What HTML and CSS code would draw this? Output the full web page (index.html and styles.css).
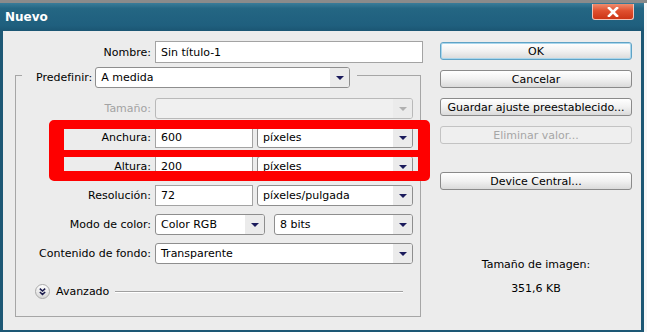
FILE: index.html
```html
<!DOCTYPE html>
<html lang="es">
<head>
    <meta charset="UTF-8">
    <title>Nuevo</title>
    <link rel="stylesheet" href="styles.css">
</head>
<body>
    <div class="window">
        <div class="titlebar">
            <span class="title">Nuevo</span>
            <span class="close">
                <svg width="14" height="10" viewBox="0 0 14 10"><path d="M3 1 L11 9 M11 1 L3 9" stroke="#fff" stroke-width="2.6" stroke-linecap="square"/></svg>
            </span>
        </div>
        <div class="content">
            <div class="main">
                <div class="row name-row">
                    <label class="lbl">Nombre:</label>
                    <div class="input name-input">Sin título-1</div>
                </div>
                <fieldset class="group">
                    <legend class="preset">
                        <span class="preset-lbl">Predefinir:</span>
                        <div class="select preset-select"><span class="val">A medida</span><span class="arrow"><i></i></span></div>
                    </legend>
                    <div class="row first">
                        <label class="lbl off">Tamaño:</label>
                        <div class="select full off"><span class="val"></span><span class="arrow"><i></i></span></div>
                    </div>
                    <div class="row">
                        <label class="lbl">Anchura:</label>
                        <div class="input num">600</div>
                        <div class="select unit"><span class="val">píxeles</span><span class="arrow"><i></i></span></div>
                    </div>
                    <div class="row">
                        <label class="lbl">Altura:</label>
                        <div class="input num">200</div>
                        <div class="select unit"><span class="val">píxeles</span><span class="arrow"><i></i></span></div>
                    </div>
                    <div class="row">
                        <label class="lbl">Resolución:</label>
                        <div class="input num">72</div>
                        <div class="select unit"><span class="val">píxeles/pulgada</span><span class="arrow"><i></i></span></div>
                    </div>
                    <div class="row">
                        <label class="lbl">Modo de color:</label>
                        <div class="select mode"><span class="val">Color RGB</span><span class="arrow"><i></i></span></div>
                        <div class="select bits"><span class="val">8 bits</span><span class="arrow"><i></i></span></div>
                    </div>
                    <div class="row">
                        <label class="lbl">Contenido de fondo:</label>
                        <div class="select full"><span class="val">Transparente</span><span class="arrow"><i></i></span></div>
                    </div>
                    <div class="advanced">
                        <span class="toggle">
                            <svg width="15" height="15" viewBox="0 0 15 15">
                                <defs>
                                    <linearGradient id="tg" x1="0" y1="0" x2="0" y2="1">
                                        <stop offset="0" stop-color="#ffffff"/>
                                        <stop offset="1" stop-color="#d6d6d6"/>
                                    </linearGradient>
                                </defs>
                                <circle cx="7.5" cy="7.5" r="7" fill="url(#tg)" stroke="#a9a9a9"/>
                                <path d="M4.8 4.6 L7.5 7 L10.2 4.6 M4.8 8 L7.5 10.4 L10.2 8" fill="none" stroke="#1b1b4d" stroke-width="1.5"/>
                            </svg>
                        </span>
                        <span class="adv-text">Avanzado</span>
                        <span class="adv-line"></span>
                    </div>
                </fieldset>
            </div>
            <div class="side">
                <div class="btn default">OK</div>
                <div class="btn">Cancelar</div>
                <div class="btn">Guardar ajuste preestablecido...</div>
                <div class="btn off">Eliminar valor...</div>
                <div class="btn device">Device Central...</div>
                <div class="size-title">Tamaño de imagen:</div>
                <div class="size-value">351,6 KB</div>
            </div>
        </div>
        <div class="mark"><div class="mark-bar"></div></div>
    </div>
</body>
</html>
```

FILE: styles.css
```css
html, body {
    margin: 0;
    padding: 0;
}

body {
    font-family: "DejaVu Sans", sans-serif;
    font-size: 11px;
    color: #000000;
    background: linear-gradient(#8b8b8b 0 3px, #f7f7f7 3px);
    height: 332px;
    overflow: hidden;
}

.window {
    position: relative;
    width: 644px;
    margin-top: 3px;
}

/* barra de titulo */
.titlebar {
    height: 28px;
    display: flex;
    justify-content: space-between;
    align-items: flex-start;
    background: linear-gradient(#3a7c99, #246683 20%, #1f5f7e 80%, #1b5673);
}

.title {
    align-self: center;
    padding-left: 5px;
    color: #ffffff;
    font-weight: bold;
    font-size: 12px;
}

.close {
    width: 40px;
    height: 15px;
    margin-top: 1px;
    margin-right: 10px;
    border: 1px solid #f3c2b6;
    border-top: none;
    border-radius: 0 0 3px 3px;
    background: linear-gradient(#ee8d6f, #e0502f 45%, #cc3516);
    display: flex;
    align-items: center;
    justify-content: center;
}

.close svg {
    display: block;
}

.content {
    display: flex;
    height: 289px;
    padding: 10px 9px 0 12px;
    background: #ececec;
    border: 3px solid #1d5875;
    border-top: none;
}

.main {
    width: 409px;
}

.side {
    width: 192px;
    margin-left: 16px;
    padding-top: 1px;
}

/* filas */
.row {
    display: flex;
    align-items: center;
    height: 21px;
    margin-top: 8px;
}

.row.first {
    margin-top: 10px;
}

.name-row {
    height: 22px;
    margin-top: 0;
}

.lbl {
    width: 135px;
    margin-right: 4px;
    text-align: right;
    white-space: nowrap;
}

.name-row .lbl {
    width: 136px;
}

.lbl.off {
    color: #a3a3a3;
}

.input {
    box-sizing: border-box;
    height: 100%;
    background: #ffffff;
    border: 1px solid #a3a3a3;
    padding-left: 5px;
    display: flex;
    align-items: center;
}

.name-input {
    width: 268px;
}

.input.num {
    width: 98px;
}

.select {
    box-sizing: border-box;
    height: 100%;
    display: flex;
    background: #ffffff;
    border: 1px solid #8e8e8e;
    border-radius: 3px;
}

.select .val {
    flex: 1;
    padding-left: 5px;
    display: flex;
    align-items: center;
    white-space: nowrap;
    overflow: hidden;
}

.select .arrow {
    width: 19px;
    display: flex;
    align-items: center;
    justify-content: center;
    background: #ebebeb;
    border-radius: 0 2px 2px 0;
}

.select .arrow i {
    width: 0;
    height: 0;
    border-left: 4px solid transparent;
    border-right: 4px solid transparent;
    border-top: 4px solid #1b1b5c;
}

.select.off {
    background: #f0f0f0;
    border-color: #b9b9b9;
}

.select.off .arrow i {
    border-top-color: #b0b0b0;
}

.select.full {
    width: 258px;
}

.unit {
    width: 156px;
    margin-left: 4px;
}

.mode {
    width: 110px;
}

.bits {
    width: 139px;
    margin-left: 9px;
}

/* grupo */
.group {
    margin: 0;
    padding: 0 7px 17px 0;
    min-width: 0;
    width: 406px;
    box-sizing: border-box;
    border: 1px solid #a6a6a6;
}

.preset {
    display: flex;
    align-items: center;
    margin-left: 6px;
    padding: 4px 7px 0 14px;
}

.preset-lbl {
    margin-right: 3px;
}

.preset-select {
    width: 255px;
    height: 21px;
}

.advanced {
    display: flex;
    align-items: center;
    height: 15px;
    margin-top: 20px;
    padding-left: 19px;
}

.toggle svg {
    display: block;
}

.adv-text {
    margin-left: 6px;
}

.adv-line {
    flex: 1;
    height: 1px;
    margin-left: 6px;
    margin-right: 10px;
    background: #a0a0a0;
    box-shadow: 0 1px 0 #ffffff;
}

/* botones */
.btn {
    box-sizing: border-box;
    height: 18px;
    margin-bottom: 10px;
    border: 1px solid #8a8a8a;
    border-radius: 3px;
    background: linear-gradient(#ffffff, #f1f1f1 50%, #dadada);
    display: flex;
    align-items: center;
    justify-content: center;
}

.btn.default {
    border-color: #5fa3c6;
    box-shadow: inset 0 0 0 1px #a9d6ec;
}

.btn.off {
    color: #a6a6a6;
    border-color: #c3c3c3;
    background: #efefef;
}

.btn.device {
    margin-top: 28px;
}

.size-title,
.size-value {
    text-align: center;
    line-height: 14px;
}

.size-title {
    margin-top: 68px;
}

.size-value {
    margin-top: 10px;
}

/* marca roja sobre anchura y altura */
.mark {
    position: absolute;
    left: 49px;
    top: 117px;
    width: 381px;
    height: 61px;
    box-sizing: border-box;
    border: solid #fe0000;
    border-width: 9px 12px 10px 15px;
    border-radius: 5px;
}

.mark-bar {
    position: absolute;
    left: 0;
    right: 0;
    top: 21px;
    height: 7px;
    background: #fe0000;
}
```
